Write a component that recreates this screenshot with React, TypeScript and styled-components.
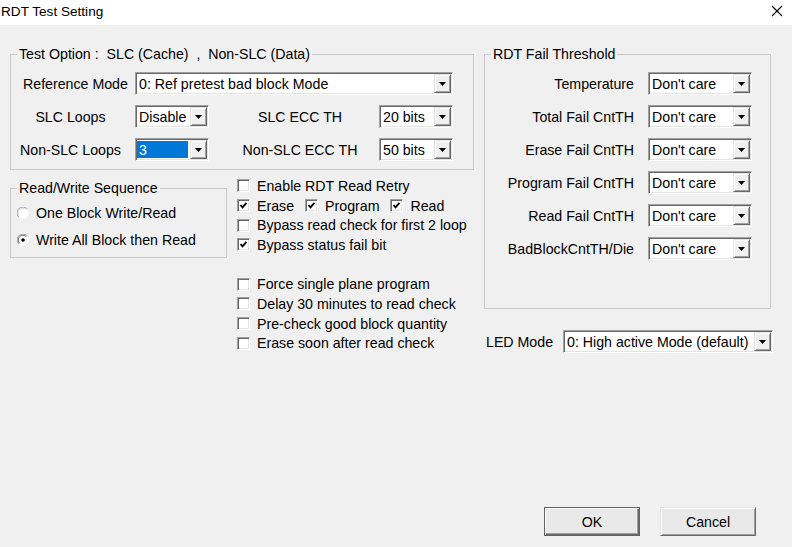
import React from "react";
import styled, { createGlobalStyle } from "styled-components";

const Global = createGlobalStyle`
  html, body { margin: 0; padding: 0; }
  body {
    font-family: "Liberation Sans", Arial, sans-serif;
    font-size: 14.2px;
    color: #000;
    background: #f0f0f0;
  }
  * { box-sizing: border-box; }
`;

const Window = styled.div`
  width: 792px;
  height: 547px;
  display: flex;
  flex-direction: column;
  background: #f0f0f0;
  overflow: hidden;
`;

const TitleBar = styled.div`
  height: 25px;
  flex: 0 0 25px;
  background: #fff;
  display: flex;
  align-items: center;
  justify-content: space-between;
  padding: 0 9px 3px 1px;
  font-size: 13.6px;
`;

const CloseIcon = styled.svg`
  width: 12px;
  height: 12px;
  display: block;
`;

const Body = styled.div`
  flex: 1;
  display: flex;
  flex-direction: column;
  padding: 21px 19px 11px 10px;
`;

const Main = styled.div`
  display: flex;
  gap: 10px;
  align-items: flex-start;
`;

const Column = styled.div<{ $w: number }>`
  width: ${(p) => p.$w}px;
  display: flex;
  flex-direction: column;
`;

const Group = styled.fieldset<{ $w: number; $mt?: number }>`
  margin: ${(p) => p.$mt ?? 0}px 0 0 0;
  padding: 0;
  min-width: 0;
  width: ${(p) => p.$w}px;
  border: 1px solid #c9c9c9;
`;

const Legend = styled.legend`
  margin-left: 6px;
  padding: 0 2px;
  height: 16px;
  line-height: 16px;
  white-space: pre;
`;

const OptionGrid = styled.div`
  display: grid;
  grid-template-columns: 124px 74px 170px 74px;
  row-gap: 10px;
  align-items: center;
  padding: 10px 20px 8px 0;
`;

const FieldLabel = styled.div<{ $align?: "left" | "center" | "right"; $pl?: number; $pr?: number }>`
  text-align: ${(p) => p.$align ?? "center"};
  padding-left: ${(p) => p.$pl ?? 0}px;
  padding-right: ${(p) => p.$pr ?? 0}px;
  white-space: nowrap;
`;

const ComboFrame = styled.div<{ $span?: string; $w?: number }>`
  height: 23px;
  display: flex;
  background: #fff;
  border: 1px solid;
  border-color: #a0a0a0 #ffffff #ffffff #a0a0a0;
  box-shadow: inset 1px 1px #696969, inset -1px -1px #e3e3e3;
  padding: 1px;
  ${(p) => (p.$span ? `grid-column: ${p.$span};` : "")}
  ${(p) => (p.$w ? `width: ${p.$w}px;` : "")}
`;

const ComboText = styled.div<{ $sel?: boolean }>`
  flex: 1;
  display: flex;
  align-items: center;
  padding-left: 2px;
  margin: ${(p) => (p.$sel ? "1px 2px 1px 0" : "0")};
  white-space: nowrap;
  overflow: hidden;
  background: ${(p) => (p.$sel ? "#0078d7" : "transparent")};
  color: ${(p) => (p.$sel ? "#fff" : "#000")};
`;

const ComboButton = styled.div`
  width: 17px;
  flex: 0 0 17px;
  background: #f0f0f0;
  border: 1px solid;
  border-color: #e3e3e3 #696969 #696969 #e3e3e3;
  box-shadow: inset 1px 1px #fff, inset -1px -1px #a0a0a0;
  display: flex;
  align-items: center;
  justify-content: center;
`;

const Arrow = styled.svg`
  width: 7px;
  height: 4px;
  display: block;
`;

function Combo(props: { value: string; span?: string; w?: number; sel?: boolean }) {
  return (
    <ComboFrame $span={props.span} $w={props.w}>
      <ComboText $sel={props.sel}>{props.value}</ComboText>
      <ComboButton>
        <Arrow viewBox="0 0 7 4">
          <polygon points="0,0 7,0 3.5,4" fill="#000" />
        </Arrow>
      </ComboButton>
    </ComboFrame>
  );
}

const Lower = styled.div`
  display: flex;
  gap: 10px;
  align-items: flex-start;
  margin-top: 6px;
`;

const RadioList = styled.div`
  display: flex;
  flex-direction: column;
  gap: 7px;
  padding: 7px 0 7px 6px;
`;

const RadioRow = styled.label`
  display: flex;
  align-items: center;
  height: 20px;
  gap: 7px;
  white-space: nowrap;
`;

const RadioIcon = styled.svg`
  width: 12px;
  height: 12px;
  display: block;
`;

function Radio(props: { label: string; checked?: boolean }) {
  return (
    <RadioRow>
      <RadioIcon viewBox="0 0 12 12">
        <circle cx="6" cy="6" r="5.5" fill="#fff" />
        <path d="M1.8 10.2 A5.5 5.5 0 0 1 10.2 1.8" fill="none" stroke="#a0a0a0" strokeWidth="1" />
        <path d="M2.6 9.4 A4.5 4.5 0 0 1 9.4 2.6" fill="none" stroke={props.checked ? "#696969" : "#d8d8d8"} strokeWidth="1" />
        <path d="M10.2 1.8 A5.5 5.5 0 0 1 1.8 10.2" fill="none" stroke="#f4f4f4" strokeWidth="1" />
        {props.checked && <circle cx="6" cy="6" r="1.8" fill="#000" />}
      </RadioIcon>
      {props.label}
    </RadioRow>
  );
}

const CheckList = styled.div`
  display: flex;
  flex-direction: column;
`;

const CheckRow = styled.div`
  display: flex;
  align-items: center;
  height: 19.7px;
  gap: 11px;
`;

const CheckItem = styled.label`
  display: flex;
  align-items: center;
  gap: 7px;
  white-space: nowrap;
`;

const CheckBox = styled.span`
  width: 13px;
  height: 13px;
  flex: 0 0 13px;
  background: #fff;
  border: 1px solid;
  border-color: #a0a0a0 #ffffff #ffffff #a0a0a0;
  box-shadow: inset 1px 1px #696969, inset -1px -1px #e3e3e3;
  display: flex;
  align-items: center;
  justify-content: center;
`;

const CheckMark = styled.svg`
  width: 9px;
  height: 9px;
  display: block;
`;

function Check(props: { label: string; checked?: boolean }) {
  return (
    <CheckItem>
      <CheckBox>
        {props.checked && (
          <CheckMark viewBox="0 0 9 9">
            <polyline points="1.5,4 3.5,6.3 7.5,1.8" fill="none" stroke="#000" strokeWidth="1.9" />
          </CheckMark>
        )}
      </CheckBox>
      {props.label}
    </CheckItem>
  );
}

const ThresholdGrid = styled.div`
  display: grid;
  grid-template-columns: 149px 104px;
  column-gap: 14px;
  row-gap: 10px;
  align-items: center;
  padding: 10px 18px 48px 0;
`;

const LedRow = styled.div`
  display: flex;
  align-items: center;
  margin-top: 21px;
`;

const LedLabel = styled.div`
  flex: 0 0 79px;
  padding-left: 2px;
`;

const Footer = styled.div`
  margin-top: auto;
  display: flex;
  justify-content: flex-end;
  gap: 20px;
  padding-right: 17px;
`;

const Button = styled.button<{ $default?: boolean }>`
  width: 96px;
  height: 29px;
  font-family: inherit;
  font-size: 14.2px;
  color: #000;
  background: #e9e9e9;
  border: 1px solid;
  border-color: ${(p) => (p.$default ? "#646464" : "#e3e3e3 #696969 #696969 #e3e3e3")};
  box-shadow: ${(p) =>
    p.$default
      ? "inset 1px 1px #fff, inset -1px -1px #696969, inset -2px -2px #a0a0a0"
      : "inset 1px 1px #fff, inset -1px -1px #a0a0a0"};
  padding: 0;
`;

const thresholds = [
  "Temperature",
  "Total Fail CntTH",
  "Erase Fail CntTH",
  "Program Fail CntTH",
  "Read Fail CntTH",
  "BadBlockCntTH/Die",
];

export default function App() {
  return (
    <>
      <Global />
      <Window>
        <TitleBar>
          <span>RDT Test Setting</span>
          <CloseIcon viewBox="0 0 12 12">
            <path d="M1 1 L11 11 M11 1 L1 11" stroke="#000" strokeWidth="1.1" />
          </CloseIcon>
        </TitleBar>
        <Body>
          <Main>
            <Column $w={464}>
              <Group $w={464}>
                <Legend>{"Test Option :  SLC (Cache)  ,  Non-SLC (Data)"}</Legend>
                <OptionGrid>
                  <FieldLabel $align="left" $pl={12}>Reference Mode</FieldLabel>
                  <Combo value="0: Ref pretest bad block Mode" span="2 / 5" />
                  <FieldLabel $pr={5}>SLC Loops</FieldLabel>
                  <Combo value="Disable" />
                  <FieldLabel $pl={12}>SLC ECC TH</FieldLabel>
                  <Combo value="20 bits" />
                  <FieldLabel $pr={5}>Non-SLC Loops</FieldLabel>
                  <Combo value="3" sel />
                  <FieldLabel $pl={12}>Non-SLC ECC TH</FieldLabel>
                  <Combo value="50 bits" />
                </OptionGrid>
              </Group>
              <Lower>
                <Group $w={217} $mt={4}>
                  <Legend>Read/Write Sequence</Legend>
                  <RadioList>
                    <Radio label="One Block Write/Read" />
                    <Radio label="Write All Block then Read" checked />
                  </RadioList>
                </Group>
                <CheckList>
                  <CheckRow>
                    <Check label="Enable RDT Read Retry" />
                  </CheckRow>
                  <CheckRow>
                    <Check label="Erase" checked />
                    <Check label="Program" checked />
                    <Check label="Read" checked />
                  </CheckRow>
                  <CheckRow>
                    <Check label="Bypass read check for first 2 loop" />
                  </CheckRow>
                  <CheckRow>
                    <Check label="Bypass status fail bit" checked />
                  </CheckRow>
                  <CheckRow />
                  <CheckRow>
                    <Check label="Force single plane program" />
                  </CheckRow>
                  <CheckRow>
                    <Check label="Delay 30 minutes to read check" />
                  </CheckRow>
                  <CheckRow>
                    <Check label="Pre-check good block quantity" />
                  </CheckRow>
                  <CheckRow>
                    <Check label="Erase soon after read check" />
                  </CheckRow>
                </CheckList>
              </Lower>
            </Column>
            <Column $w={289}>
              <Group $w={287}>
                <Legend>RDT Fail Threshold</Legend>
                <ThresholdGrid>
                  {thresholds.map((t) => (
                    <React.Fragment key={t}>
                      <FieldLabel $align="right">{t}</FieldLabel>
                      <Combo value="Don't care" />
                    </React.Fragment>
                  ))}
                </ThresholdGrid>
              </Group>
              <LedRow>
                <LedLabel>LED Mode</LedLabel>
                <Combo value="0: High active Mode (default)" w={210} />
              </LedRow>
            </Column>
          </Main>
          <Footer>
            <Button $default>OK</Button>
            <Button>Cancel</Button>
          </Footer>
        </Body>
      </Window>
    </>
  );
}
